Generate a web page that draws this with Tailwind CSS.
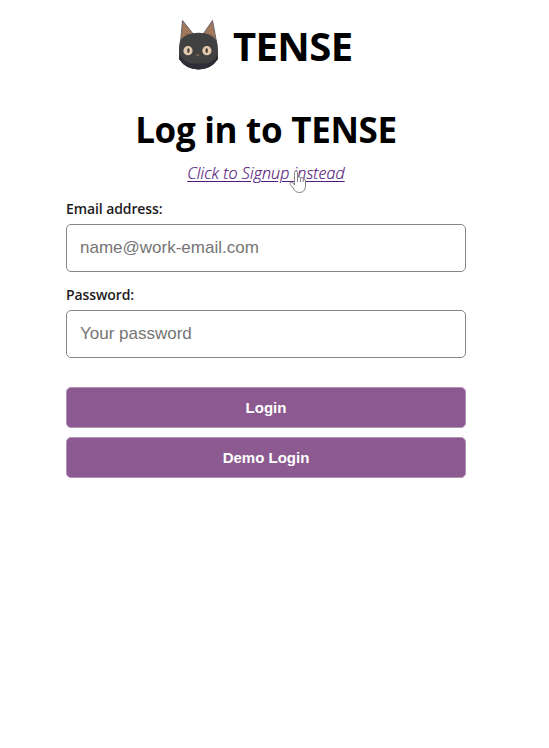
<!DOCTYPE html>
<html lang="en">
<head>
<meta charset="utf-8">
<title>TENSE</title>
<script src="https://cdn.jsdelivr.net/npm/@tailwindcss/browser@4"></script>
</head>
<body class="bg-white text-black font-['Segoe_UI','Open_Sans',sans-serif] overflow-hidden">
<main class="ml-[66px] w-[400px] flex flex-col">
  <header class="mt-[19px] ml-[112px] h-[52px] flex items-center whitespace-nowrap">
    <svg class="w-[42px] h-[52px] shrink-0" viewBox="0 0 42 52">
      <path d="M2.500 23 4.500 1.500 16 16zM38.500 23 34.500 1.500 24.500 16z" fill="#a17859" stroke="#66646a" stroke-width="1" stroke-linejoin="round"/>
      <path d="M2.500 21Q8 13.700 20.500 13.700T38 21Q40 24 40 32V40Q33 50.500 20.500 50.500T1 40V31Q1 24 2.500 21z" fill="#414142"/>
      <path d="M1 36Q7 43.500 13 44.500H28Q35 43 40 36V40Q33 50.500 20.500 50.500T1 40z" fill="#2e2d37"/>
      <circle cx="10" cy="31.700" r="4.600" fill="#e3c9ad"/><circle cx="28.900" cy="31.700" r="4.600" fill="#e3c9ad"/>
      <ellipse cx="10.400" cy="31.500" rx="1.200" ry="2.500" fill="#4b4038"/><ellipse cx="28.700" cy="31.500" rx="1.200" ry="2.500" fill="#4b4038"/>
      <path d="M17.700 35.500h4l-2 2z" fill="#94705a"/>
    </svg>
    <span class="mt-[2px] ml-[13px] text-[40px] leading-[52px] font-bold tracking-[-0.6px]">TENSE</span>
  </header>
  <h1 class="mt-[35px] h-[48px] text-center text-[35px] leading-[48px] font-bold tracking-[-0.3px] whitespace-nowrap">Log in to TENSE</h1>
  <div class="relative mt-[7px] h-[22px] text-center">
    <a class="text-[16px] leading-[22px] italic underline underline-offset-2 text-[#551a7b] font-light tracking-[0.09px] [-webkit-text-stroke:0.2px_#551a7b] whitespace-nowrap">Click to Signup instead</a>
    <svg class="absolute left-[223px] top-[9px] w-[18px] h-[24px]" viewBox="0 0 18 24">
      <path d="M5.500 15V2.500Q5.500 1 7 1T8.500 2.500V8Q8.500 6.700 10 6.700T11.500 8.500Q11.500 7.500 13 7.500T14.300 9.200Q16.500 8.700 16.500 11V16Q16 22.500 10.500 22.500Q6 22.500 4.200 18L1.200 14.500Q.5 12.500 2.200 12.200T5.500 15zM8.500 8v4M11.500 8.500v3.500M14.300 9.200V12" fill="#ffffff" stroke="#85858e" stroke-width="1"/>
    </svg>
  </div>
  <label class="mt-[16px] h-[20px] text-[14px] leading-[20px] font-semibold tracking-[-0.1px] text-[#1d1c1d]">Email address:</label>
  <input class="mt-[5px] h-[48px] w-full rounded-[5px] border border-[#868686] px-[13px] font-['Liberation_Sans',sans-serif] text-[17px] placeholder:text-[#757575]" placeholder="name@work-email.com">
  <label class="mt-[13px] h-[20px] text-[14px] leading-[20px] font-semibold tracking-[-0.1px] text-[#1d1c1d]">Password:</label>
  <input class="mt-[5px] h-[48px] w-full rounded-[5px] border border-[#868686] px-[13px] font-['Liberation_Sans',sans-serif] text-[17px] placeholder:text-[#757575]" placeholder="Your password">
  <button class="mt-[29px] h-[41px] rounded-[5px] bg-[#8c5a90] border border-[#b092b3] pt-px text-white font-bold text-[15px] font-['Liberation_Sans',sans-serif]">Login</button>
  <button class="mt-[9px] h-[41px] rounded-[5px] bg-[#8c5a90] border border-[#b092b3] pt-px text-white font-bold text-[15px] font-['Liberation_Sans',sans-serif]">Demo Login</button>
</main>
</body>
</html>
